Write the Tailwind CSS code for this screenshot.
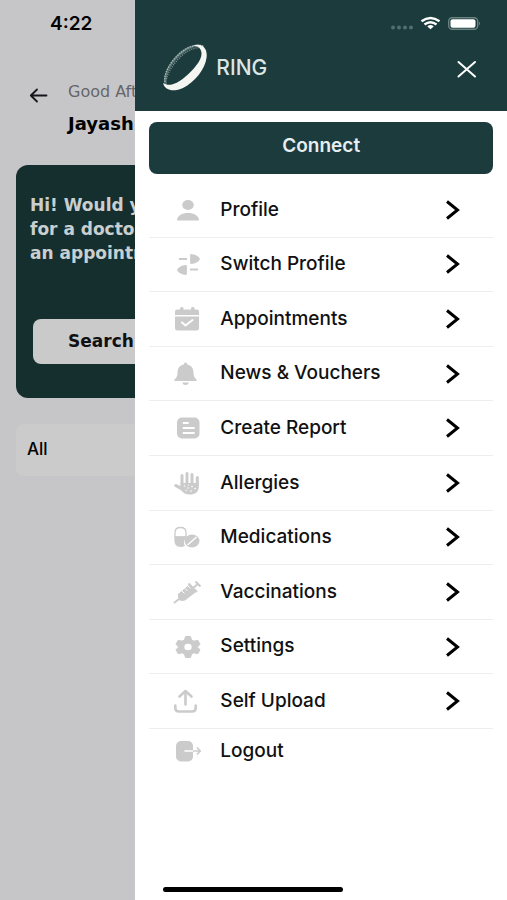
<!DOCTYPE html>
<html lang="en">
<head>
<meta charset="utf-8">
<meta name="viewport" content="width=device-width, initial-scale=1">
<title>Ring menu</title>
<script src="https://cdn.jsdelivr.net/npm/@tailwindcss/browser@4"></script>
</head>
<body class="bg-[#c6c6c9] font-['Inter','Liberation_Sans',sans-serif] text-black">
<div class="flex min-h-screen">

  <!-- Dimmed home screen behind the drawer -->
  <main class="w-[26.7%] shrink-0 overflow-hidden whitespace-nowrap">
    <div class="pl-[50px] pt-3 text-[19px] leading-6 font-semibold">4:22</div>
    <div class="mt-[46px] flex items-start gap-5 pl-7">
      <a href="#" aria-label="Back" class="mt-1 block">
        <svg class="h-5 w-5" viewBox="0 0 20 20" fill="none" stroke="#15151c" stroke-width="1.8" stroke-linecap="round" stroke-linejoin="round"><path d="M18.5 9.5H2.8M9 3.5L2.8 9.5L9 15.5"/></svg>
      </a>
      <div class="font-['DejaVu_Sans',sans-serif]">
        <p class="text-base leading-5 text-[#66666a]">Good Afternoon</p>
        <h1 class="mt-2.5 text-lg leading-6 font-bold">Jayash</h1>
      </div>
    </div>
    <section class="mt-[29px] ml-4 h-[233px] w-96 rounded-xl bg-[#152f2f] pt-7 pl-[14px] font-['DejaVu_Sans',sans-serif]">
      <p class="text-[17px] leading-6 font-bold text-[#c9cfcf]">Hi! Would you like<br>for a doctor<br>an appointment</p>
      <button type="button" class="mt-[54px] ml-[3px] block h-[45px] w-80 rounded-lg bg-[#cbcacb] pl-[35px] text-left text-[17px] font-bold text-[#111111]">Search</button>
    </section>
    <button type="button" class="mt-[26px] ml-4 block h-[52px] w-96 rounded-lg bg-[#cbcbcc] pl-[11px] text-left text-[17px] font-medium">All</button>
  </main>

  <!-- Drawer -->
  <aside class="flex min-w-0 flex-1 flex-col bg-white">
    <header class="h-[111px] bg-[#1b3b3c]">
      <div class="flex h-11 items-center justify-end pt-1 pr-[26px]">
        <svg class="h-5 w-[92px]" viewBox="0 0 92 20" aria-label="Network and battery">
          <g fill="#526e6e"><circle cx="4" cy="13.5" r="2"/><circle cx="10" cy="13.5" r="2"/><circle cx="16" cy="13.5" r="2"/><circle cx="22" cy="13.5" r="2"/></g>
          <g fill="none" stroke="#fff" stroke-width="2.4"><path d="M32.500 7.300Q41.500 0.500 50.500 7.300"/><path d="M35.500 10.500Q41.500 6 47.500 10.500"/></g>
          <path d="M38.300 12.400Q41.500 9.800 44.700 12.400L41.500 15.300Z" fill="#fff"/>
          <rect x="59.700" y="3.700" width="29" height="11.600" rx="3.500" fill="none" stroke="#6b8282" stroke-width="1.400"/>
          <rect x="61.500" y="5.300" width="25" height="8.400" rx="2" fill="#fff"/>
          <path d="M90 7.500Q92 9.500 90 11.500Z" fill="#6b8282"/>
        </svg>
      </div>
      <div class="flex h-12 items-center pr-[30px] pl-[26px]">
        <svg class="h-12 w-12 shrink-0" viewBox="0 0 48 48" aria-hidden="true">
          <path d="M4 42C0 34 8 17 20 7C28 1 37-1 43 2C34 2 27 5 20 11C10 20 4 31 6 40Z" fill="#54706f"/>
          <path d="M4 38C2 29 11 15 22 7C30 1 39 0 43 3" fill="none" stroke="#aebdbc" stroke-width="1.300" stroke-dasharray="1.500 1"/>
          <path d="M5.500 35C7 27 15 16 24 9C30 5 36 3 40 4" fill="none" stroke="#8fa3a2" stroke-width="1.200" stroke-dasharray="1 1.200"/>
          <path d="M32 1.500C41-1 47 4 45.500 14C44 25 34 38 22 44C13 48 4 47 2 39C8 43 16 40 24 33C33 25 41 16 40.500 9C40 4 37 2 32 1.500Z" fill="#f5f6f1"/>
        </svg>
        <span class="ml-[7px] text-[21px] font-medium text-[#dbe6e5]">RING</span>
        <button type="button" aria-label="Close menu" class="ml-auto block pt-1">
          <svg class="h-5 w-5" viewBox="0 0 20 20" fill="none" stroke="#fff" stroke-width="2" stroke-linecap="round"><path d="M1.500 2L18 16.500M18 2L1.500 16.500"/></svg>
        </button>
      </div>
    </header>

    <div class="px-[14px] pt-[11px]">
      <button type="button" class="block h-[52px] w-full rounded-lg bg-[#1b3b3c] pb-1 text-[19px] font-semibold text-[#e6eef3]">Connect</button>
    </div>

    <nav class="mx-[14px] mt-[9px] text-[19px] font-medium text-[#111111]">
      <ul class="grid h-[546px] auto-rows-fr">
        <li class="border-b border-[#eeeeee]"><a href="#" class="flex h-full items-center pr-8 pl-6">
          <svg class="mr-[19px] h-7 w-7" viewBox="0 0 28 28" fill="#cbcbcb"><ellipse cx="15" cy="9" rx="5.800" ry="5"/><path d="M4 24.500C4 19.500 9 17 15 17S26 19.500 26 24.500Z"/></svg>
          Profile
          <svg class="ml-auto h-5 w-4" viewBox="0 0 16 20" fill="none" stroke="#000" stroke-width="3"><path d="M2 1.500L12.500 10L2 18.500"/></svg></a></li>
        <li class="border-b border-[#eeeeee]"><a href="#" class="flex h-full items-center pr-8 pl-6">
          <svg class="mr-[19px] h-7 w-7" viewBox="0 0 28 28" fill="#cbcbcb"><path d="M6 8H14V10H6ZM17 18.500H25V20.500H17Z"/><path d="M18 5Q24 5.500 26 9Q24 12.500 18 13Z" stroke="#cbcbcb" stroke-width="1.800" stroke-linejoin="round"/><path d="M13 16Q7 16.500 5 20Q7 23.500 13 24Z" stroke="#cbcbcb" stroke-width="1.800" stroke-linejoin="round"/></svg>
          Switch Profile
          <svg class="ml-auto h-5 w-4" viewBox="0 0 16 20" fill="none" stroke="#000" stroke-width="3"><path d="M2 1.500L12.500 10L2 18.500"/></svg></a></li>
        <li class="border-b border-[#eeeeee]"><a href="#" class="flex h-full items-center pr-8 pl-6">
          <svg class="mr-[19px] h-7 w-7" viewBox="0 0 28 28" fill="#cbcbcb"><rect x="7" y="2" width="3.500" height="5" rx="1.500"/><rect x="18" y="2" width="3.500" height="5" rx="1.500"/><path d="M2 10V6.500Q2 4.500 4 4.500H24Q26 4.500 26 6.500V10Z"/><path d="M2 11.500H26V23Q26 25.500 23.500 25.500H4.500Q2 25.500 2 23Z"/><path d="M9 17.500L12.500 20.500L19.500 15" fill="none" stroke="#fff" stroke-width="2" stroke-linecap="round" stroke-linejoin="round"/></svg>
          Appointments
          <svg class="ml-auto h-5 w-4" viewBox="0 0 16 20" fill="none" stroke="#000" stroke-width="3"><path d="M2 1.500L12.500 10L2 18.500"/></svg></a></li>
        <li class="border-b border-[#eeeeee]"><a href="#" class="flex h-full items-center pr-8 pl-6">
          <svg class="mr-[19px] h-7 w-7" viewBox="0 0 28 28" fill="#cbcbcb"><path d="M12.500 2.500Q14 2.500 14.300 4.500C19 5.500 20.500 9 20.500 13Q20.500 17 23.500 19.500Q24.500 21 23 21H2Q0.500 21 1.500 19.500Q4.500 17 4.500 13C4.500 9 6 5.500 10.700 4.500Q11 2.500 12.500 2.500Z"/><path d="M9 22.500H16Q15 25 12.500 25T9 22.500Z"/></svg>
          News &amp; Vouchers
          <svg class="ml-auto h-5 w-4" viewBox="0 0 16 20" fill="none" stroke="#000" stroke-width="3"><path d="M2 1.500L12.500 10L2 18.500"/></svg></a></li>
        <li class="border-b border-[#eeeeee]"><a href="#" class="flex h-full items-center pr-8 pl-6">
          <svg class="mr-[19px] h-7 w-7" viewBox="0 0 28 28"><rect x="4" y="3.500" width="22.500" height="21" rx="5" fill="#cbcbcb"/><path d="M10.500 9H15M10.500 14H21M10.500 19H21" stroke="#fff" stroke-width="1.800" stroke-linecap="round"/></svg>
          Create Report
          <svg class="ml-auto h-5 w-4" viewBox="0 0 16 20" fill="none" stroke="#000" stroke-width="3"><path d="M2 1.500L12.500 10L2 18.500"/></svg></a></li>
        <li class="border-b border-[#eeeeee]"><a href="#" class="flex h-full items-center pr-8 pl-6">
          <svg class="mr-[19px] h-7 w-7" viewBox="0 0 28 28" fill="#cbcbcb"><path d="M9 15V6.500M14 14V4.500M19 14V5.500M24.300 16V8.500" stroke="#cbcbcb" stroke-width="3" stroke-linecap="round"/><path d="M7.500 14H25.800V18C25.800 23 22 25.500 17 25.500C12.500 25.500 10.500 24 8.500 21.500L1.500 17.500Q0.500 15.500 3 15L7.500 17Z"/><g fill="#fff"><circle cx="11.500" cy="17" r=".8"/><circle cx="15" cy="19" r=".8"/><circle cx="19" cy="17.500" r=".8"/><circle cx="22" cy="19.500" r=".8"/><circle cx="13" cy="21.500" r=".7"/><circle cx="18" cy="22" r=".8"/><circle cx="15.500" cy="16" r=".6"/></g></svg>
          Allergies
          <svg class="ml-auto h-5 w-4" viewBox="0 0 16 20" fill="none" stroke="#000" stroke-width="3"><path d="M2 1.500L12.500 10L2 18.500"/></svg></a></li>
        <li class="border-b border-[#eeeeee]"><a href="#" class="flex h-full items-center pr-8 pl-6">
          <svg class="mr-[19px] h-7 w-7" viewBox="0 0 28 28" fill="#cbcbcb"><path d="M2 14V9.500Q2 4.500 7.500 4.500T13 9.500V14Z" fill="#fff" stroke="#cbcbcb" stroke-width="1.300"/><path d="M1.400 13.500H13.600L11 18Q10.500 21 12 22.500Q10.500 24 7.500 24Q1.400 23.500 1.400 18Z"/><ellipse cx="19" cy="18" rx="7.500" ry="6.500"/><path d="M14.500 22L23.500 14" stroke="#fff" stroke-width="1.300"/></svg>
          Medications
          <svg class="ml-auto h-5 w-4" viewBox="0 0 16 20" fill="none" stroke="#000" stroke-width="3"><path d="M2 1.500L12.500 10L2 18.500"/></svg></a></li>
        <li class="border-b border-[#eeeeee]"><a href="#" class="flex h-full items-center pr-8 pl-6">
          <svg class="mr-[19px] h-7 w-7" viewBox="0 0 28 28" fill="#cbcbcb"><path d="M5 16L16 7L23 14L12 22.500Q8.500 23.500 6 22Q4.500 19.500 5 16Z"/><path d="M1 25L6 21M20 10L25 6M15.500 5.500L24 14M22.500 3.500L27.500 8.500" fill="none" stroke="#cbcbcb" stroke-width="2"/><path d="M9 13L11.500 15.500M12 10.500L14.500 13M15 8L17.500 10.500" stroke="#fff" stroke-width="1"/></svg>
          Vaccinations
          <svg class="ml-auto h-5 w-4" viewBox="0 0 16 20" fill="none" stroke="#000" stroke-width="3"><path d="M2 1.500L12.500 10L2 18.500"/></svg></a></li>
        <li class="border-b border-[#eeeeee]"><a href="#" class="flex h-full items-center pr-8 pl-6">
          <svg class="mr-[19px] h-7 w-7" viewBox="0 0 28 28"><path d="M12.500 3.500H17.500L18.500 7L21 8.200L24.800 7.300L27 11.300L24.300 14L27 16.700L24.800 20.700L21 19.800L18.500 21L17.500 24.500H12.500L11.500 21L9 19.800L5.200 20.700L3 16.700L5.700 14L3 11.300L5.200 7.300L9 8.200L11.500 7Z" fill="#cbcbcb" stroke="#cbcbcb" stroke-linejoin="round"/><ellipse cx="15" cy="14" rx="3.700" ry="3.300" fill="#fff"/></svg>
          Settings
          <svg class="ml-auto h-5 w-4" viewBox="0 0 16 20" fill="none" stroke="#000" stroke-width="3"><path d="M2 1.500L12.500 10L2 18.500"/></svg></a></li>
        <li class="border-b border-[#eeeeee]"><a href="#" class="flex h-full items-center pr-8 pl-6">
          <svg class="mr-[19px] h-7 w-7" viewBox="0 0 28 28" fill="none" stroke="#cbcbcb" stroke-width="2.600" stroke-linecap="round" stroke-linejoin="round"><path d="M12.500 17.500V4.500M6.500 9.500L12.500 4L18.500 9.500M2.300 18.500V21Q2.300 24.500 6 24.500H19Q22.700 24.500 22.700 21V18.500"/></svg>
          Self Upload
          <svg class="ml-auto h-5 w-4" viewBox="0 0 16 20" fill="none" stroke="#000" stroke-width="3"><path d="M2 1.500L12.500 10L2 18.500"/></svg></a></li>
      </ul>
      <a href="#" class="flex h-11 items-center pr-8 pl-6">
        <svg class="mr-[19px] h-7 w-7" viewBox="0 0 28 28"><rect x="3" y="4" width="17" height="20.500" rx="5" fill="#cbcbcb"/><path d="M12 14H20" stroke="#fff" stroke-width="1.600" stroke-linecap="round"/><path d="M20 14H27M24 10.500L27.300 14L24 17.500" fill="none" stroke="#cbcbcb" stroke-width="1.700" stroke-linejoin="round"/></svg>
        Logout
      </a>
    </nav>

    <div class="mt-auto mb-2 ml-7 h-[5px] w-[180px] rounded-full bg-black"></div>
  </aside>
</div>
</body>
</html>
